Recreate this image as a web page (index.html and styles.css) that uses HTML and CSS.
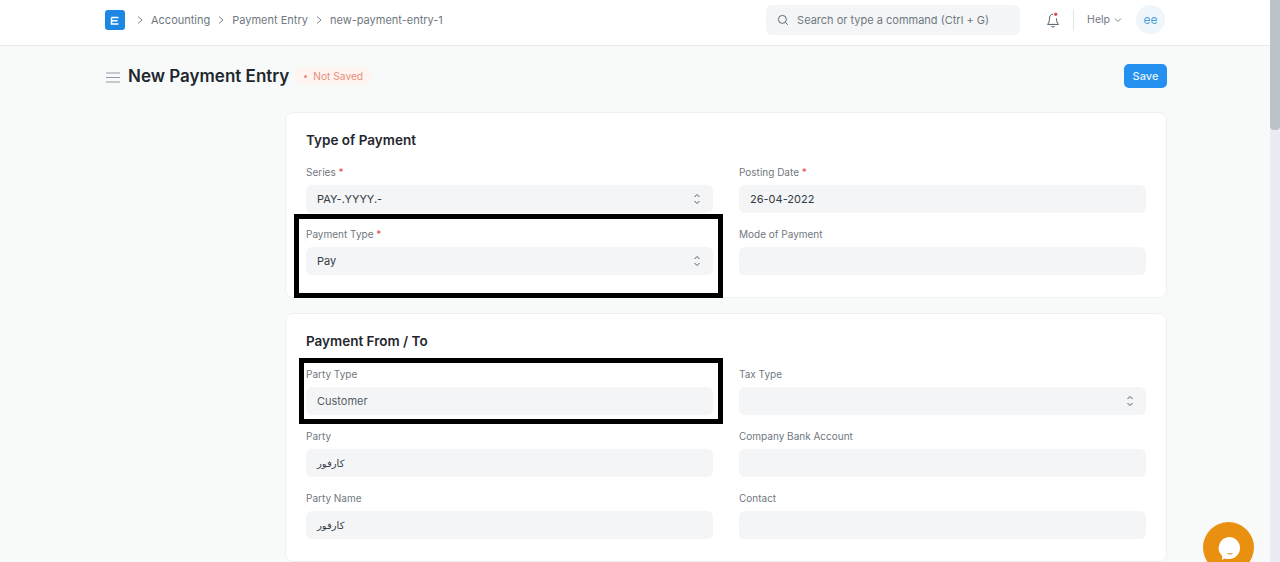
FILE: index.html
```html
<!DOCTYPE html>
<html lang="en">
<head>
<meta charset="utf-8">
<title>New Payment Entry</title>
<link rel="stylesheet" href="styles.css">
</head>
<body>
<header class="navbar">
  <svg class="logo" viewBox="0 0 20 20"><rect width="20" height="20" rx="3" fill="#1c88e4"/><path d="M6.500 7.500h7M6.500 7.500v6.500h7M6.500 10.800h6" fill="none" stroke="#fff" stroke-width="1.500"/></svg>
  <nav class="crumbs">
    <svg class="crumb-sep" viewBox="0 0 8 10"><path d="M2 1.500 6 5 2 8.500" fill="none" stroke="#7c858e" stroke-width="1"/></svg>
    <span>Accounting</span>
    <svg class="crumb-sep" viewBox="0 0 8 10"><path d="M2 1.500 6 5 2 8.500" fill="none" stroke="#7c858e" stroke-width="1"/></svg>
    <span>Payment Entry</span>
    <svg class="crumb-sep" viewBox="0 0 8 10"><path d="M2 1.500 6 5 2 8.500" fill="none" stroke="#7c858e" stroke-width="1"/></svg>
    <span>new-payment-entry-1</span>
  </nav>
  <div class="search">
    <svg class="search-icon" viewBox="0 0 12 12"><circle cx="5.400" cy="5.400" r="4" fill="none" stroke="#5f6870" stroke-width="1"/><path d="m8.400 8.400 2.400 2.400" stroke="#5f6870" stroke-width="1"/></svg>
    <span>Search or type a command (Ctrl + G)</span>
  </div>
  <svg class="bell" viewBox="0 0 14 16"><path d="M7 2.200c-2.400 0-3.500 1.900-3.500 4.200 0 3-.8 4.800-2 6h11c-1.200-1.200-2-3-2-6" fill="none" stroke="#4c5a67" stroke-width="1"/><path d="M5.300 14.300c.8.900 2.600.9 3.400 0" fill="none" stroke="#4c5a67" stroke-width="1"/><circle cx="9.700" cy="2.300" r="1.700" fill="#e0525a"/></svg>
  <div class="divider"></div>
  <div class="help">Help
    <svg class="help-caret" viewBox="0 0 8 6"><path d="M1 1.500 4 4.500 7 1.500" fill="none" stroke="#7c858e" stroke-width="1"/></svg>
  </div>
  <div class="avatar">ee</div>
</header>

<main class="page">
  <div class="page-head">
    <svg class="menu" viewBox="0 0 14 11"><path d="M0 1h14M0 5.500h14M0 10h14" stroke="#8d99a6" stroke-width="1.200"/></svg>
    <h1>New Payment Entry</h1>
    <span class="status"><span class="status-dot"></span>Not Saved</span>
    <button class="save">Save</button>
  </div>

  <section class="card">
    <h2>Type of Payment</h2>
    <div class="grid">
      <div class="field">
        <label>Series <em>*</em></label>
        <div class="control">PAY-.YYYY.-
          <svg class="updown" viewBox="0 0 8 14"><path d="M1.500 5 4 2.500 6.500 5M1.500 9 4 11.500 6.500 9" fill="none" stroke="#4c5a67" stroke-width="1"/></svg>
        </div>
      </div>
      <div class="field">
        <label>Posting Date <em>*</em></label>
        <div class="control">26-04-2022</div>
      </div>
      <div class="field">
        <label>Payment Type <em>*</em></label>
        <div class="control">Pay
          <svg class="updown" viewBox="0 0 8 14"><path d="M1.500 5 4 2.500 6.500 5M1.500 9 4 11.500 6.500 9" fill="none" stroke="#4c5a67" stroke-width="1"/></svg>
        </div>
      </div>
      <div class="field">
        <label>Mode of Payment</label>
        <div class="control"></div>
      </div>
    </div>
  </section>

  <section class="card">
    <h2>Payment From / To</h2>
    <div class="grid">
      <div class="field">
        <label>Party Type</label>
        <div class="control muted">Customer</div>
      </div>
      <div class="field">
        <label>Tax Type</label>
        <div class="control">
          <svg class="updown" viewBox="0 0 8 14"><path d="M1.500 5 4 2.500 6.500 5M1.500 9 4 11.500 6.500 9" fill="none" stroke="#4c5a67" stroke-width="1"/></svg>
        </div>
      </div>
      <div class="field">
        <label>Party</label>
        <div class="control arabic">كارفور</div>
      </div>
      <div class="field">
        <label>Company Bank Account</label>
        <div class="control"></div>
      </div>
      <div class="field">
        <label>Party Name</label>
        <div class="control arabic">كارفور</div>
      </div>
      <div class="field">
        <label>Contact</label>
        <div class="control"></div>
      </div>
    </div>
  </section>
</main>

<div class="mark mark-payment"></div>
<div class="mark mark-party"></div>

<div class="chat"><svg class="chat-icon" viewBox="0 0 26 26"><path d="M13 2a11 11 0 0 1 0 22c-1.500 0-3 0-4.500-.6L6 25l.2-4A11 11 0 0 1 13 2z" fill="#fff"/><path d="M11.500 18.500q2.500 1.200 5 0" fill="none" stroke="#b98a3a" stroke-width="1"/></svg></div>
<div class="scrollbar"><div class="thumb"></div></div>
</body>
</html>
```

FILE: styles.css
```css
* { box-sizing: border-box; }
html, body { height: 100%; }
body {
  margin: 0;
  overflow: hidden;
  background: #f8fafa;
  color: #333c44;
  font-family: Inter, "DejaVu Sans", sans-serif;
  font-size: 11px;
}
.navbar {
  display: flex;
  align-items: center;
  height: 46px;
  padding: 0 115px 6px 105px;
  background: #fff;
  border-bottom: 1px solid #e6e9ec;
}
.logo { width: 20px; height: 20px; flex: none; }
.crumbs {
  display: flex;
  align-items: center;
  flex: 1;
  margin-left: 11px;
  color: #6f7880;
  font-size: 11px;
}
.crumb-sep { width: 8px; height: 10px; margin-right: 7px; }
.crumbs span { margin-right: 7px; }
.search {
  display: flex;
  align-items: center;
  width: 254px;
  height: 30px;
  margin-right: 26px;
  padding-left: 11px;
  background: #f4f5f6;
  border-radius: 6px;
  color: #6f7880;
  font-size: 11px;
}
.search-icon { width: 12px; height: 12px; margin-right: 8px; }
.bell { width: 14px; height: 16px; }
.divider { width: 1px; height: 22px; margin: 0 13px; background: #e3e6e9; }
.help { display: flex; align-items: center; color: #6f7880; font-size: 10.500px; }
.help-caret { width: 8px; height: 6px; margin-left: 4px; }
.avatar {
  display: flex;
  align-items: center;
  justify-content: center;
  width: 29px;
  height: 29px;
  margin-left: 14px;
  border-radius: 50%;
  background: #eef6fc;
  color: #4f9fd8;
  font-size: 12px;
}
.page { width: 1062px; margin-left: 105px; }
.page-head {
  display: flex;
  align-items: center;
  height: 24px;
  margin-top: 18px;
}
.menu { width: 14px; height: 11px; margin: 2px 0 0 1px; }
h1 {
  margin: 0 0 0 8px;
  color: #1f272e;
  font-size: 17px;
  font-weight: 600;
}
.status {
  display: flex;
  align-items: center;
  height: 18px;
  margin-left: 7px;
  padding: 0 8px;
  border-radius: 9px;
  background: #fff5f0;
  color: #e58e7c;
  font-size: 10.200px;
}
.status-dot {
  width: 3px;
  height: 3px;
  margin-right: 6px;
  border-radius: 50%;
  background: #e58e7c;
}
.save {
  height: 24px;
  width: 43px;
  margin-left: auto;
  padding: 0;
  border: 0;
  border-radius: 5px;
  background: #2490ef;
  color: #e6f3fe;
  font: 500 11px Inter, sans-serif;
}
.card {
  width: 882px;
  margin-left: 180px;
  padding: 19px 21px 22px 20px;
  background: #fff;
  border: 1px solid #eef0f2;
  border-radius: 8px;
}
.page-head + .card { margin-top: 24px; }
.card + .card { margin-top: 15px; }
.card + .card .grid { margin-top: 19px; }
h2 {
  margin: 0 0 18px;
  color: #1f272e;
  font-size: 13.500px;
  line-height: 16px;
  font-weight: 600;
}
.grid {
  display: grid;
  grid-template-columns: 407px 407px;
  column-gap: 26px;
  row-gap: 15px;
}
label {
  display: block;
  height: 13px;
  margin-bottom: 6px;
  color: #6f7880;
  font-size: 10px;
  line-height: 13px;
}
em { color: #e24c4c; font-style: normal; }
.control {
  display: flex;
  align-items: center;
  justify-content: space-between;
  height: 28px;
  padding: 0 12px 0 11px;
  border-radius: 6px;
  background: #f4f5f6;
  color: #333c44;
  font-size: 11px;
}
.control .updown { margin-left: auto; }
.muted { color: #555e66; }
.arabic { font-family: "DejaVu Sans", sans-serif; font-size: 10px; }
.updown { width: 8px; height: 14px; }
.mark { position: absolute; border: 5px solid #000; }
.mark-payment { left: 294px; top: 214px; width: 429px; height: 84px; }
.mark-party { left: 299px; top: 358px; width: 424px; height: 66px; }
.chat {
  position: absolute;
  left: 1203px;
  top: 522px;
  display: flex;
  align-items: center;
  justify-content: center;
  width: 51px;
  height: 51px;
  border-radius: 50%;
  background: #ea9010;
}
.chat-icon { width: 26px; height: 26px; }
.scrollbar {
  position: absolute;
  top: 0;
  right: 0;
  width: 10px;
  height: 100%;
  background: #e9edf3;
}
.thumb { height: 130px; background: #bcc2c9; border-radius: 0 0 4px 4px; }
```
